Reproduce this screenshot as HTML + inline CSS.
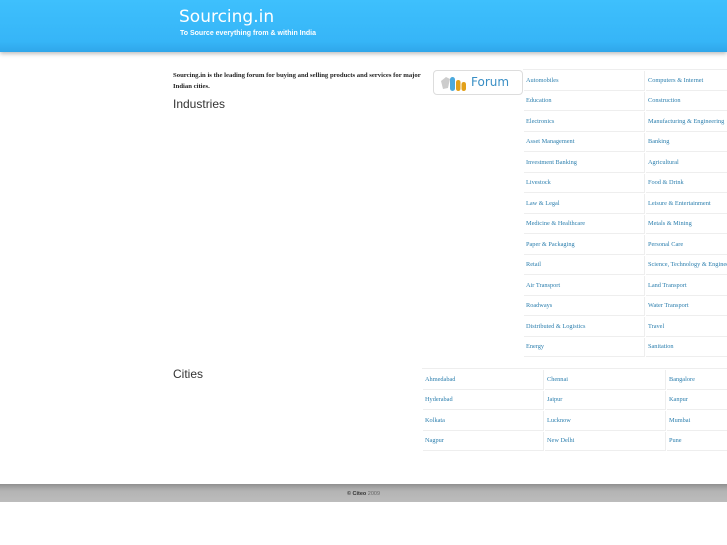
<!DOCTYPE html>
<html><head><meta charset="utf-8"><style>
*{margin:0;padding:0;box-sizing:border-box}
body{width:727px;height:545px;background:#fff;position:relative;overflow:hidden;font-family:"Liberation Serif",serif}
#hdr{position:absolute;left:0;top:0;width:727px;height:52px;background:linear-gradient(#3ec0fd,#36b5f7 80%,#2fa6ea);box-shadow:0 2px 4px rgba(0,0,0,.25)}
#hdr h1{position:absolute;left:179px;top:7px;font:normal 17px "DejaVu Sans","Liberation Sans",sans-serif;color:#fff}
#hdr p{position:absolute;left:180px;top:30px;font:bold 7px "Liberation Sans",sans-serif;color:#fff}
#intro{position:absolute;left:173px;top:70px;width:258px;font:bold 6.7px/11px "Liberation Serif",serif;color:#222}
.h2{position:absolute;left:173px;font:12px "Liberation Sans",sans-serif;color:#333}
#forum{position:absolute;left:433px;top:70px;width:90px;height:25px;border:1px solid #ddd;border-radius:4px;background:#fff;font:12px "DejaVu Sans",sans-serif;color:#3a8fc5}
table{position:absolute;border-collapse:separate;border-spacing:1px 1px;border-top:1px solid #eee;table-layout:fixed}
td{border:1px solid #eee;border-top:0;border-left:0;height:19.5px;padding:0 2px;font:6.3px "Liberation Serif",serif;color:#2c7fae;white-space:nowrap;overflow:hidden;vertical-align:middle}
#ind{left:523px;top:69px;width:245px}
#cit{left:422px;top:368px;width:367px}
#ftr{position:absolute;left:0;top:484px;width:727px;height:18px;background:linear-gradient(#8f8f8f,#a9a9a9 25%,#b4b4b4 40%,#bcbcbc);font:bold 5.5px "Liberation Sans",sans-serif;color:#333;text-align:center;line-height:20px}
#ftr span{font-weight:normal;color:#666}
</style></head><body>
<div id="hdr"><h1>Sourcing.in</h1><p>To Source everything from &amp; within India</p></div>
<div id="intro">Sourcing.in is the leading forum for buying and selling products and services for major Indian cities.</div>
<div class="h2" style="top:97px">Industries</div>
<div class="h2" style="top:367px">Cities</div>
<div id="forum">
<svg width="34" height="22" style="position:absolute;left:4px;top:2px" viewBox="0 0 34 22">
<path d="M3 8 L8 4 L12 6 L10 15 L5 16 Z" fill="#ccc"/>
<rect x="12" y="4" width="5" height="14" rx="2.5" fill="#4ba9dd"/>
<rect x="18" y="7" width="4.5" height="11" rx="2.2" fill="#e3a018"/>
<rect x="23.5" y="9" width="4.5" height="9" rx="2.2" fill="#e3a018"/>
</svg>
<span style="position:absolute;left:37px;top:4px">Forum</span></div>
<table id="ind">
<tr><td>Automobiles</td><td>Computers &amp; Internet</td></tr>
<tr><td>Education</td><td>Construction</td></tr>
<tr><td>Electronics</td><td>Manufacturing &amp; Engineering</td></tr>
<tr><td>Asset Management</td><td>Banking</td></tr>
<tr><td>Investment Banking</td><td>Agricultural</td></tr>
<tr><td>Livestock</td><td>Food &amp; Drink</td></tr>
<tr><td>Law &amp; Legal</td><td>Leisure &amp; Entertainment</td></tr>
<tr><td>Medicine &amp; Healthcare</td><td>Metals &amp; Mining</td></tr>
<tr><td>Paper &amp; Packaging</td><td>Personal Care</td></tr>
<tr><td>Retail</td><td>Science, Technology &amp; Engineering</td></tr>
<tr><td>Air Transport</td><td>Land Transport</td></tr>
<tr><td>Roadways</td><td>Water Transport</td></tr>
<tr><td>Distributed &amp; Logistics</td><td>Travel</td></tr>
<tr><td>Energy</td><td>Sanitation</td></tr>
</table>
<table id="cit">
<tr><td>Ahmedabad</td><td>Chennai</td><td>Bangalore</td></tr>
<tr><td>Hyderabad</td><td>Jaipur</td><td>Kanpur</td></tr>
<tr><td>Kolkata</td><td>Lucknow</td><td>Mumbai</td></tr>
<tr><td>Nagpur</td><td>New Delhi</td><td>Pune</td></tr>
</table>
<div id="ftr">© Citeo <span>2009</span></div>
</body></html>
